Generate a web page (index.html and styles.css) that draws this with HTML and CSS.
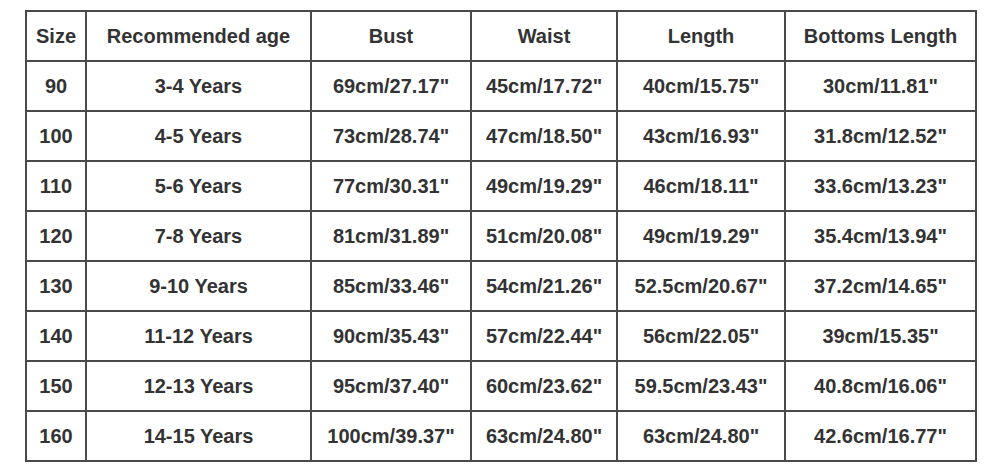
FILE: index.html
```html
<!DOCTYPE html>
<html>
<head>
<meta charset="utf-8">
<link rel="stylesheet" href="styles.css">
</head>
<body>
<table class="size-table">
  <colgroup>
    <col class="c1"><col class="c2"><col class="c3"><col class="c4"><col class="c5"><col class="c6">
  </colgroup>
  <tr><th>Size</th><th>Recommended age</th><th>Bust</th><th>Waist</th><th>Length</th><th>Bottoms Length</th></tr>
  <tr><td>90</td><td>3-4 Years</td><td>69cm/27.17"</td><td>45cm/17.72"</td><td>40cm/15.75"</td><td>30cm/11.81"</td></tr>
  <tr><td>100</td><td>4-5 Years</td><td>73cm/28.74"</td><td>47cm/18.50"</td><td>43cm/16.93"</td><td>31.8cm/12.52"</td></tr>
  <tr><td>110</td><td>5-6 Years</td><td>77cm/30.31"</td><td>49cm/19.29"</td><td>46cm/18.11"</td><td>33.6cm/13.23"</td></tr>
  <tr><td>120</td><td>7-8 Years</td><td>81cm/31.89"</td><td>51cm/20.08"</td><td>49cm/19.29"</td><td>35.4cm/13.94"</td></tr>
  <tr><td>130</td><td>9-10 Years</td><td>85cm/33.46"</td><td>54cm/21.26"</td><td>52.5cm/20.67"</td><td>37.2cm/14.65"</td></tr>
  <tr><td>140</td><td>11-12 Years</td><td>90cm/35.43"</td><td>57cm/22.44"</td><td>56cm/22.05"</td><td>39cm/15.35"</td></tr>
  <tr><td>150</td><td>12-13 Years</td><td>95cm/37.40"</td><td>60cm/23.62"</td><td>59.5cm/23.43"</td><td>40.8cm/16.06"</td></tr>
  <tr><td>160</td><td>14-15 Years</td><td>100cm/39.37"</td><td>63cm/24.80"</td><td>63cm/24.80"</td><td>42.6cm/16.77"</td></tr>
</table>
</body>
</html>
```
FILE: styles.css
```css
html, body {
  margin: 0;
  padding: 0;
  background: #ffffff;
}
body {
  padding: 10px 0 0 25px;
  font-family: "Liberation Sans", Arial, sans-serif;
}
.size-table {
  border-collapse: collapse;
  table-layout: fixed;
  width: 950px;
  color: #333333;
  font-size: 20px;
  font-weight: bold;
}
.c1 { width: 60px; }
.c2 { width: 225px; }
.c3 { width: 160px; }
.c4 { width: 146px; }
.c5 { width: 168px; }
.c6 { width: 191px; }
.size-table th,
.size-table td {
  border: 2px solid #4a4a4a;
  height: 48px;
  padding: 0;
  text-align: center;
  vertical-align: middle;
  font-weight: bold;
  white-space: nowrap;
}
```
